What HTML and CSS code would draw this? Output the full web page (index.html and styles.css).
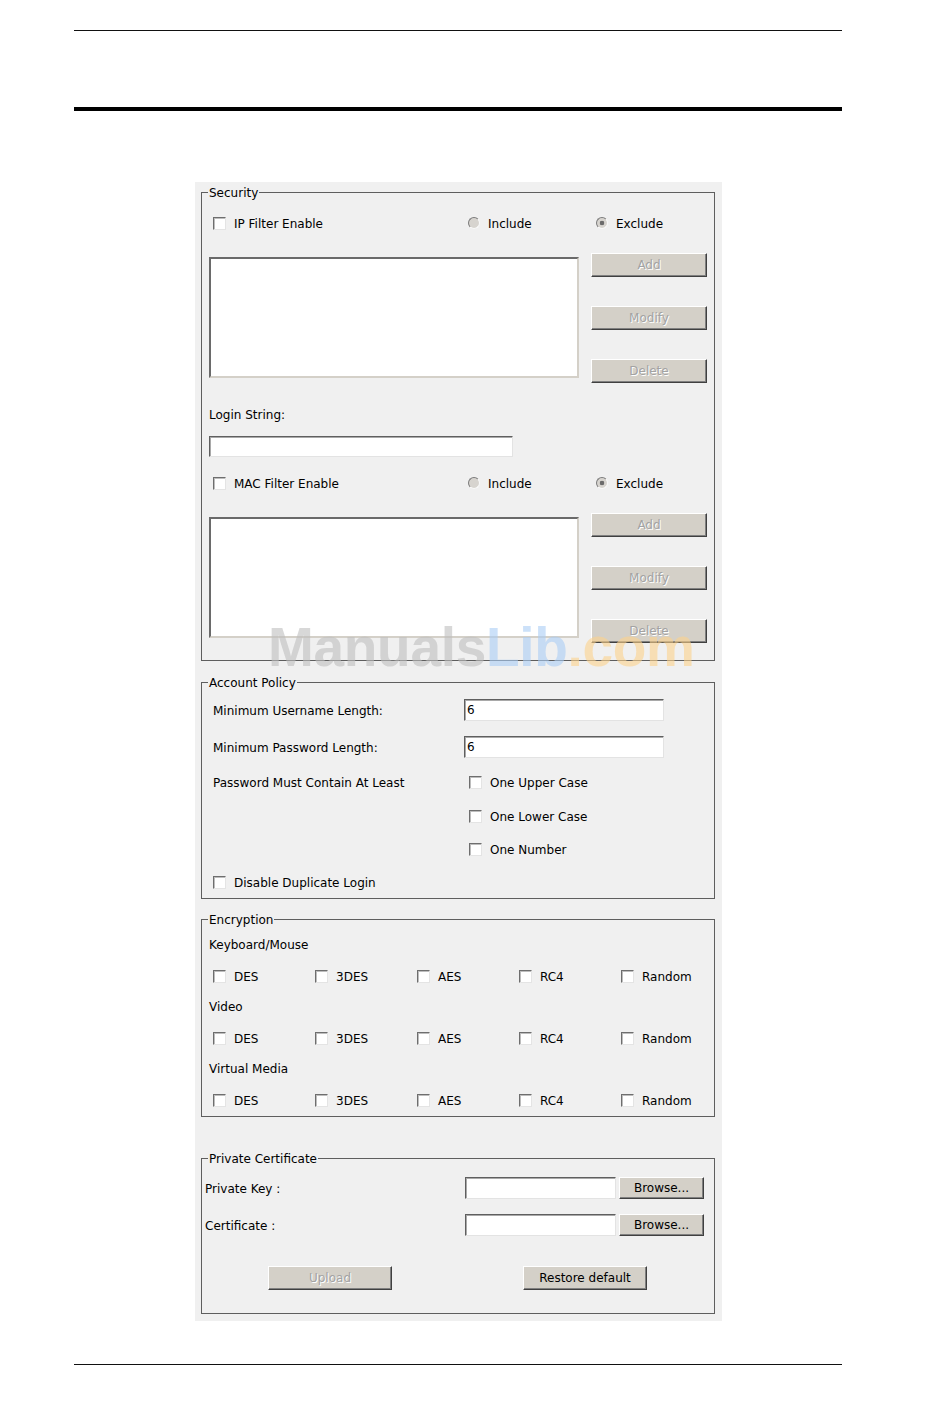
FILE: index.html
```html
<!DOCTYPE html>
<html lang="en">
<head>
  <meta charset="UTF-8" />
  <meta name="viewport" content="width=device-width, initial-scale=1.0"/>
  <title>Security</title>
  <link rel="stylesheet" href="styles.css">
</head>
<body>
<div class="page">

  <div class="rule-thin"></div>
  <div class="rule-thick"></div>

  <form class="panel">

    <!-- SECURITY -->
    <fieldset class="group group-security">
      <legend>Security</legend>

      <div class="filter-row">
        <label class="opt"><input type="checkbox"><span>IP Filter Enable</span></label>
        <label class="opt"><input type="radio" name="ipmode" disabled><span>Include</span></label>
        <label class="opt"><input type="radio" name="ipmode" checked disabled><span>Exclude</span></label>
      </div>

      <div class="list-block">
        <div class="listbox"></div>
        <div class="list-btns">
          <button type="button" class="btn" disabled>Add</button>
          <button type="button" class="btn" disabled>Modify</button>
          <button type="button" class="btn" disabled>Delete</button>
        </div>
      </div>

      <div class="field-label">Login String:</div>
      <input type="text" class="text-input login-input">

      <div class="filter-row filter-row-mac">
        <label class="opt"><input type="checkbox"><span>MAC Filter Enable</span></label>
        <label class="opt"><input type="radio" name="macmode" disabled><span>Include</span></label>
        <label class="opt"><input type="radio" name="macmode" checked disabled><span>Exclude</span></label>
      </div>

      <div class="list-block">
        <div class="listbox"></div>
        <div class="list-btns">
          <button type="button" class="btn" disabled>Add</button>
          <button type="button" class="btn" disabled>Modify</button>
          <button type="button" class="btn" disabled>Delete</button>
        </div>
      </div>
    </fieldset>

    <!-- ACCOUNT POLICY -->
    <fieldset class="group group-account">
      <legend>Account Policy</legend>

      <div class="policy-row policy-input">
        <span>Minimum Username Length:</span>
        <input type="text" class="text-input num-input" value="6">
      </div>
      <div class="policy-row policy-input second">
        <span>Minimum Password Length:</span>
        <input type="text" class="text-input num-input" value="6">
      </div>
      <div class="policy-row policy-check">
        <span>Password Must Contain At Least</span>
        <label class="opt"><input type="checkbox"><span>One Upper Case</span></label>
      </div>
      <div class="policy-row policy-check">
        <span></span>
        <label class="opt"><input type="checkbox"><span>One Lower Case</span></label>
      </div>
      <div class="policy-row policy-check tight">
        <span></span>
        <label class="opt"><input type="checkbox"><span>One Number</span></label>
      </div>
      <div class="policy-row policy-check tight">
        <label class="opt opt-left"><input type="checkbox"><span>Disable Duplicate Login</span></label>
      </div>
    </fieldset>

    <!-- ENCRYPTION -->
    <fieldset class="group group-enc">
      <legend>Encryption</legend>

      <div class="sub-label first">Keyboard/Mouse</div>
      <div class="enc-row">
        <label class="opt"><input type="checkbox"><span>DES</span></label>
        <label class="opt"><input type="checkbox"><span>3DES</span></label>
        <label class="opt"><input type="checkbox"><span>AES</span></label>
        <label class="opt"><input type="checkbox"><span>RC4</span></label>
        <label class="opt"><input type="checkbox"><span>Random</span></label>
      </div>

      <div class="sub-label">Video</div>
      <div class="enc-row">
        <label class="opt"><input type="checkbox"><span>DES</span></label>
        <label class="opt"><input type="checkbox"><span>3DES</span></label>
        <label class="opt"><input type="checkbox"><span>AES</span></label>
        <label class="opt"><input type="checkbox"><span>RC4</span></label>
        <label class="opt"><input type="checkbox"><span>Random</span></label>
      </div>

      <div class="sub-label">Virtual Media</div>
      <div class="enc-row">
        <label class="opt"><input type="checkbox"><span>DES</span></label>
        <label class="opt"><input type="checkbox"><span>3DES</span></label>
        <label class="opt"><input type="checkbox"><span>AES</span></label>
        <label class="opt"><input type="checkbox"><span>RC4</span></label>
        <label class="opt"><input type="checkbox"><span>Random</span></label>
      </div>
    </fieldset>

    <!-- PRIVATE CERTIFICATE -->
    <fieldset class="group group-cert">
      <legend>Private Certificate</legend>

      <div class="cert-row">
        <span>Private Key :</span>
        <input type="text" class="text-input">
        <button type="button" class="btn btn-small">Browse...</button>
      </div>
      <div class="cert-row second">
        <span>Certificate :</span>
        <input type="text" class="text-input">
        <button type="button" class="btn btn-small">Browse...</button>
      </div>

      <div class="action-row">
        <button type="button" class="btn btn-wide" disabled>Upload</button>
        <button type="button" class="btn btn-wide">Restore default</button>
      </div>
    </fieldset>

  </form>

  <div class="rule-thin rule-bottom"></div>

  <div class="watermark"><span class="wm-gray">Manuals</span><span class="wm-blue">Lib</span><span class="wm-orange">.com</span></div>
</div>
</body>
</html>
```

FILE: styles.css
```css
* {
  margin: 0;
  padding: 0;
  box-sizing: border-box;
}

body {
  background-color: #fff;
  font-family: "DejaVu Sans", Verdana, sans-serif;
  font-size: 12px;
  color: #000;
}

.page {
  position: relative;
  padding-top: 30px;
  height: 1406px;
}

/* page rules */
.rule-thin {
  margin-left: 74px;
  width: 768px;
  height: 1px;
  background-color: #111;
}

.rule-thick {
  margin: 76px 0 0 74px;
  width: 768px;
  height: 4px;
  background-color: #000;
}

.rule-bottom {
  margin-top: 43px;
}

/* panel */
.panel {
  margin: 71px 0 0 195px;
  width: 527px;
  background-color: #f0f0f0;
  padding: 2px 7px 7px 6px;
}

.group {
  border: 1px solid #5e5e5e;
  padding: 0;
  min-width: 0;
}

.group legend {
  margin-left: 6px;
  padding: 2px 1px 0;
  line-height: 14px;
}

.group-security {
  padding-bottom: 17px;
}

.group-account {
  margin-top: 13px;
  padding-bottom: 6px;
}

.group-enc {
  margin-top: 12px;
  padding-bottom: 6px;
}

.group-cert {
  margin-top: 33px;
  padding-bottom: 23px;
}

/* controls */
.opt {
  display: flex;
  align-items: center;
  gap: 8px;
  white-space: nowrap;
}

.opt span,
.policy-row > span,
.cert-row > span {
  padding-top: 2px;
}

input[type="checkbox"] {
  appearance: none;
  width: 13px;
  height: 13px;
  background-color: #fff;
  border: 1px solid;
  border-color: #6e6e6e #e4e4e4 #e4e4e4 #6e6e6e;
  box-shadow: inset 1px 1px 0 #bdbdbd;
  flex-shrink: 0;
}

input[type="radio"] {
  appearance: none;
  width: 12px;
  height: 12px;
  border-radius: 50%;
  background-color: #d7d4cf;
  border: 1px solid;
  border-color: #7a7a7a #fafafa #fafafa #7a7a7a;
  flex-shrink: 0;
}

input[type="radio"]:checked {
  background: radial-gradient(circle, #6b6b6b 0 2px, #d7d4cf 2.6px);
}

.text-input {
  display: block;
  height: 22px;
  background-color: #fff;
  border: 1px solid;
  border-color: #5f5f5f #e3e3e3 #e3e3e3 #5f5f5f;
  box-shadow: inset 1px 1px 0 #a9a9a9;
  padding: 0 2px;
  font-family: inherit;
  font-size: 12px;
  color: #000;
}

.btn {
  height: 24px;
  background-color: #d4d0c8;
  border: 1px solid;
  border-color: #fff #404040 #404040 #fff;
  box-shadow: inset -1px -1px 0 #808080;
  font-family: inherit;
  font-size: 12px;
  color: #000;
}

.btn:disabled {
  color: #a3a3a3;
  text-shadow: 1px 1px 0 #fff;
}

/* security */
.filter-row {
  display: grid;
  grid-template-columns: 255px 128px auto;
  align-items: center;
  height: 20px;
  margin-top: 13px;
  padding-left: 11px;
}

.filter-row-mac {
  margin-top: 16px;
}

.list-block {
  display: flex;
  gap: 12px;
  margin-top: 20px;
  padding-left: 7px;
}

.listbox {
  width: 370px;
  height: 121px;
  margin-top: 4px;
  background-color: #fff;
  border: 2px solid;
  border-color: #6a6a6a #d4d0c8 #d4d0c8 #6a6a6a;
}

.list-btns {
  display: flex;
  flex-direction: column;
  gap: 29px;
  width: 116px;
}

.field-label {
  margin-top: 24px;
  padding-left: 7px;
  line-height: 16px;
}

.login-input {
  margin: 13px 0 0 7px;
  width: 304px;
  height: 21px;
}

/* account policy */
.policy-row {
  display: grid;
  grid-template-columns: 251px 1fr;
  align-items: center;
  padding-left: 11px;
}

.policy-input {
  height: 22px;
  margin-top: 9px;
}

.policy-input.second {
  margin-top: 15px;
}

.num-input {
  width: 200px;
}

.policy-check {
  height: 20px;
  margin-top: 14px;
}

.policy-check.tight {
  margin-top: 13px;
}

.policy-check .opt {
  margin-left: 5px;
}

.policy-check .opt-left {
  margin-left: 0;
}

/* encryption */
.sub-label {
  margin-top: 13px;
  padding-left: 7px;
  line-height: 16px;
}

.sub-label.first {
  margin-top: 10px;
}

.enc-row {
  display: grid;
  grid-template-columns: repeat(5, 102px);
  align-items: center;
  height: 20px;
  margin-top: 13px;
  padding-left: 11px;
}

/* private certificate */
.cert-row {
  display: grid;
  grid-template-columns: 257px 151px 85px;
  column-gap: 3px;
  align-items: center;
  height: 22px;
  margin-top: 11px;
  padding-left: 3px;
}

.cert-row.second {
  margin-top: 15px;
}

.cert-row .text-input {
  width: 151px;
}

.btn-small {
  height: 22px;
}

.action-row {
  display: flex;
  gap: 131px;
  margin-top: 30px;
  padding-left: 66px;
}

.btn-wide {
  width: 124px;
}

/* watermark */
.watermark {
  position: absolute;
  left: 268px;
  top: 620px;
  font-family: "Liberation Sans", Arial, sans-serif;
  font-weight: bold;
  font-size: 55px;
  line-height: 55px;
  letter-spacing: -0.3px;
  white-space: nowrap;
  pointer-events: none;
}

.wm-gray {
  color: rgba(190, 190, 190, 0.6);
}

.wm-blue {
  color: rgba(170, 205, 245, 0.6);
}

.wm-orange {
  color: rgba(252, 210, 140, 0.6);
}
```
